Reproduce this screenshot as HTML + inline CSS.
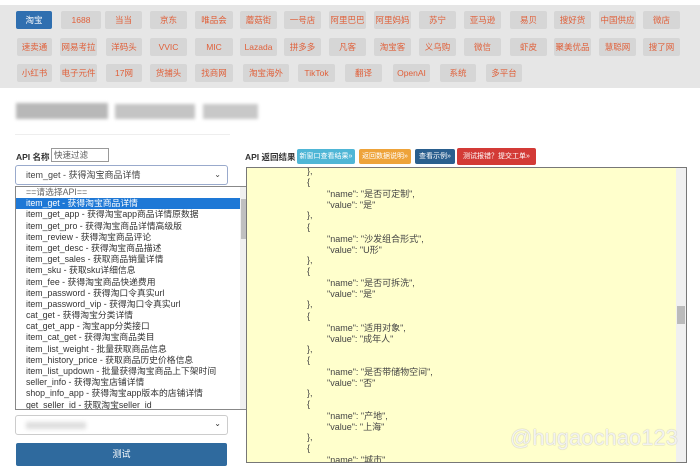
<!DOCTYPE html>
<html><head><meta charset="utf-8"><style>
*{margin:0;padding:0;box-sizing:border-box}
body{width:700px;height:470px;background:#fff;font-family:"Liberation Sans","Noto Sans CJK SC",sans-serif;position:relative;overflow:hidden;color:#333}
.bar{position:absolute;left:0;top:5px;width:700px;height:83px;background:#e6e6e6}
.b{position:absolute;height:18px;background:#d6d6d6;color:#e0603a;font-size:8.5px;line-height:18px;text-align:center;border-radius:2px}
.b.on{background:#2f6fb0;color:#fff}
.blur{position:absolute;background:#b8b8b8;filter:blur(1.5px)}
.ab{position:absolute}
.list{position:absolute;left:15px;top:186px;width:236px;height:224px;border:1px solid #888;background:#fff;font-size:8.8px;color:#333;overflow:hidden}
.list div{height:11.2px;line-height:11.2px;padding-left:10px;white-space:nowrap}
.ta{position:absolute;left:246px;top:167px;width:441px;height:296px;border:1px solid #777;background:#ffffcc;overflow:hidden;font-size:9px;color:#444}
.ta span{position:absolute;white-space:nowrap}
.hb{position:absolute;top:149px;height:15px;font-size:7px;color:#fff;line-height:15px;text-align:center;border-radius:2px;white-space:nowrap;overflow:hidden}
</style></head><body>
<div class="bar"></div>
<div class="b on" style="left:16px;top:11px;width:36px">淘宝</div>
<div class="b" style="left:61px;top:11px;width:40px">1688</div>
<div class="b" style="left:105px;top:11px;width:37px">当当</div>
<div class="b" style="left:150px;top:11px;width:37px">京东</div>
<div class="b" style="left:195px;top:11px;width:38px">唯品会</div>
<div class="b" style="left:240px;top:11px;width:37px">蘑菇街</div>
<div class="b" style="left:284px;top:11px;width:37px">一号店</div>
<div class="b" style="left:329px;top:11px;width:37px">阿里巴巴</div>
<div class="b" style="left:374px;top:11px;width:37px">阿里妈妈</div>
<div class="b" style="left:419px;top:11px;width:37px">苏宁</div>
<div class="b" style="left:464px;top:11px;width:37px">亚马逊</div>
<div class="b" style="left:510px;top:11px;width:37px">易贝</div>
<div class="b" style="left:554px;top:11px;width:37px">搜好货</div>
<div class="b" style="left:599px;top:11px;width:37px">中国供应</div>
<div class="b" style="left:643px;top:11px;width:37px">微店</div>
<div class="b" style="left:17px;top:38px;width:35px">速卖通</div>
<div class="b" style="left:60px;top:38px;width:37px">网易考拉</div>
<div class="b" style="left:106px;top:38px;width:36px">洋码头</div>
<div class="b" style="left:150px;top:38px;width:37px">VVIC</div>
<div class="b" style="left:195px;top:38px;width:38px">MIC</div>
<div class="b" style="left:240px;top:38px;width:37px">Lazada</div>
<div class="b" style="left:284px;top:38px;width:37px">拼多多</div>
<div class="b" style="left:329px;top:38px;width:37px">凡客</div>
<div class="b" style="left:374px;top:38px;width:37px">淘宝客</div>
<div class="b" style="left:419px;top:38px;width:37px">义乌购</div>
<div class="b" style="left:464px;top:38px;width:37px">微信</div>
<div class="b" style="left:510px;top:38px;width:37px">虾皮</div>
<div class="b" style="left:554px;top:38px;width:37px">聚美优品</div>
<div class="b" style="left:599px;top:38px;width:37px">慧聪网</div>
<div class="b" style="left:643px;top:38px;width:37px">搜了网</div>
<div class="b" style="left:17px;top:64px;width:35px">小红书</div>
<div class="b" style="left:60px;top:64px;width:37px">电子元件</div>
<div class="b" style="left:106px;top:64px;width:36px">17网</div>
<div class="b" style="left:150px;top:64px;width:37px">货捕头</div>
<div class="b" style="left:195px;top:64px;width:38px">找商网</div>
<div class="b" style="left:243px;top:64px;width:46px">淘宝海外</div>
<div class="b" style="left:298px;top:64px;width:37px">TikTok</div>
<div class="b" style="left:345px;top:64px;width:37px">翻译</div>
<div class="b" style="left:393px;top:64px;width:37px">OpenAI</div>
<div class="b" style="left:440px;top:64px;width:36px">系统</div>
<div class="b" style="left:486px;top:64px;width:36px">多平台</div>
<div class="blur" style="left:16px;top:103px;width:92px;height:16px"></div>
<div class="blur" style="left:115px;top:104px;width:80px;height:15px;background:#c4c4c4"></div>
<div class="blur" style="left:203px;top:104px;width:55px;height:15px;background:#c8c8c8"></div>
<div class="ab" style="left:15px;top:134px;width:215px;height:1px;background:#eee"></div>
<div class="ab" style="left:16px;top:151px;font-size:8.5px;font-weight:bold;color:#333">API 名称</div>
<div class="ab" style="left:51px;top:148px;width:58px;height:14px;border:1px solid #999;font-size:8.5px;line-height:12px;padding-left:2px;color:#555">快速过滤</div>
<div class="ab" style="left:15px;top:165px;width:213px;height:20px;border:1px solid #9ac;border-radius:3px;font-size:9px;line-height:18px;padding-left:10px;color:#444">item_get - 获得淘宝商品详情<span style="position:absolute;right:6px;font-size:8px">⌄</span></div>
<div class="list">
<div style="color:#666">==请选择API==</div>
<div style="background:#1e78d6;color:#fff;margin-right:10px">item_get - 获得淘宝商品详情</div>
<div>item_get_app - 获得淘宝app商品详情原数据</div>
<div>item_get_pro - 获得淘宝商品详情高级版</div>
<div>item_review - 获得淘宝商品评论</div>
<div>item_get_desc - 获得淘宝商品描述</div>
<div>item_get_sales - 获取商品销量详情</div>
<div>item_sku - 获取sku详细信息</div>
<div>item_fee - 获得淘宝商品快递费用</div>
<div>item_password - 获得淘口令真实url</div>
<div>item_password_vip - 获得淘口令真实url</div>
<div>cat_get - 获得淘宝分类详情</div>
<div>cat_get_app - 淘宝app分类接口</div>
<div>item_cat_get - 获得淘宝商品类目</div>
<div>item_list_weight - 批量获取商品信息</div>
<div>item_history_price - 获取商品历史价格信息</div>
<div>item_list_updown - 批量获得淘宝商品上下架时间</div>
<div>seller_info - 获得淘宝店铺详情</div>
<div>shop_info_app - 获得淘宝app版本的店铺详情</div>
<div>get_seller_id - 获取淘宝seller_id</div>
<div style="position:absolute;right:0;top:0;width:10px;height:222px;background:#f0f0f0;padding:0"></div>
<div style="position:absolute;right:1px;top:12px;width:8px;height:40px;background:#c0c0c0;padding:0"></div>
</div>
<div class="ab" style="left:15px;top:415px;width:213px;height:20px;border:1px solid #ccc;border-radius:3px"><span style="position:absolute;left:10px;top:6px;width:60px;height:7px;background:#ddd;filter:blur(2px)"></span><span style="position:absolute;right:6px;top:3px;font-size:8px">⌄</span></div>
<div class="ab" style="left:16px;top:443px;width:211px;height:23px;background:#2f6a9e;border-radius:2px;color:#fff;font-size:9px;line-height:23px;text-align:center">测试</div>
<div class="ab" style="left:245px;top:151px;font-size:8.5px;font-weight:bold;color:#333">API 返回结果</div>
<div class="hb" style="left:297px;width:58px;background:#4fb6d6">新窗口查看结果»</div>
<div class="hb" style="left:359px;width:52px;background:#eea33a">返回数据说明»</div>
<div class="hb" style="left:415px;width:40px;background:#2a5f8e">查看示例»</div>
<div class="hb" style="left:457px;width:79px;top:148px;height:17px;line-height:17px;background:#d33a36">测试报错？提交工单»</div>
<div class="ta">
<span style="left:60px;top:-2px">},</span>
<span style="left:60px;top:9px">{</span>
<span style="left:80px;top:19px">"name": "是否可定制",</span>
<span style="left:80px;top:30px">"value": "是"</span>
<span style="left:60px;top:42px">},</span>
<span style="left:60px;top:54px">{</span>
<span style="left:80px;top:64px">"name": "沙发组合形式",</span>
<span style="left:80px;top:75px">"value": "U形"</span>
<span style="left:60px;top:87px">},</span>
<span style="left:60px;top:98px">{</span>
<span style="left:80px;top:108px">"name": "是否可拆洗",</span>
<span style="left:80px;top:119px">"value": "是"</span>
<span style="left:60px;top:131px">},</span>
<span style="left:60px;top:143px">{</span>
<span style="left:80px;top:153px">"name": "适用对象",</span>
<span style="left:80px;top:164px">"value": "成年人"</span>
<span style="left:60px;top:176px">},</span>
<span style="left:60px;top:187px">{</span>
<span style="left:80px;top:197px">"name": "是否带储物空间",</span>
<span style="left:80px;top:208px">"value": "否"</span>
<span style="left:60px;top:220px">},</span>
<span style="left:60px;top:231px">{</span>
<span style="left:80px;top:241px">"name": "产地",</span>
<span style="left:80px;top:252px">"value": "上海"</span>
<span style="left:60px;top:264px">},</span>
<span style="left:60px;top:275px">{</span>
<span style="left:80px;top:285px">"name": "城市",</span>
<div style="position:absolute;right:0;top:0;width:10px;height:296px;background:#f0f0f0"></div>
<div style="position:absolute;right:1px;top:138px;width:8px;height:18px;background:#bbb"></div>
</div>
<div class="ab" style="left:510px;top:425px;font-size:22px;color:rgba(255,255,255,.85);text-shadow:0 0 1px #999;white-space:nowrap">@hugaochao123</div>
</body></html>
